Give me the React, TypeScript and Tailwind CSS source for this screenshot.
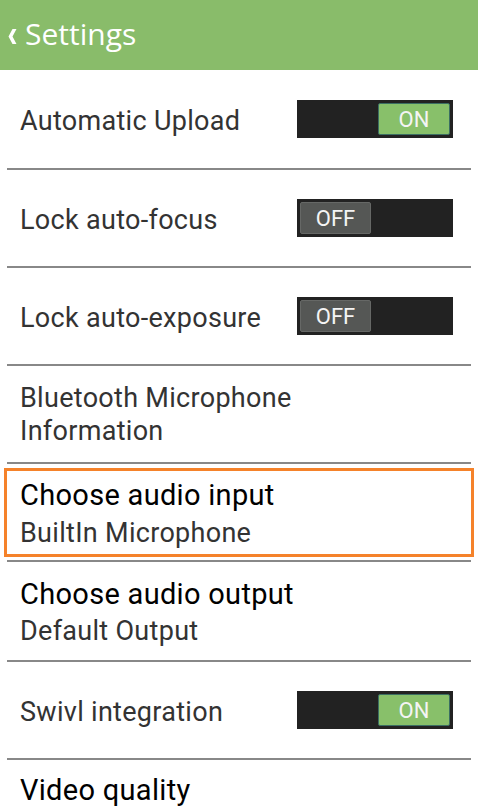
import React from 'react';

function Toggle({ on }: { on: boolean }) {
    return (
        <div className="w-[156px] h-[38px] bg-[#222222] flex items-center px-[3px] shrink-0" style={{ justifyContent: on ? 'flex-end' : 'flex-start' }}>
            <div
                className={
                    on
                        ? 'w-[72px] h-[32px] rounded-[2px] bg-[#88c06a] border border-[#3b6e62] flex items-center justify-center text-[22px] text-[#f4f4f4]'
                        : 'w-[71px] h-[32px] rounded-[2px] bg-[#555755] border border-[#666866] flex items-center justify-center text-[22px] text-[#f4f4f4]'
                }
            >
                {on ? 'ON' : 'OFF'}
            </div>
        </div>
    );
}

function Divider() {
    return <div className="mx-[7px] h-[2px] bg-[#888888]" />;
}

function ToggleRow({ label, on, h }: { label: string; on: boolean; h: string }) {
    return (
        <div className={`${h} flex items-center justify-between pl-[20px] pr-[25px]`}>
            <span className="text-[27px] tracking-[0.3px] text-[#333333] pt-[4px]">{label}</span>
            <Toggle on={on} />
        </div>
    );
}

export default function App() {
    return (
        <div className="w-[478px] h-[811px] bg-white overflow-hidden" style={{ fontFamily: 'Roboto, "Liberation Sans", sans-serif' }}>
            {/* Header */}
            <div className="h-[70px] bg-[#89bc6a] flex items-center pl-[8px] gap-[8px]">
                <svg width="9" height="15" viewBox="0 0 9 15" className="mt-[3px]">
                    <polygon points="4.5,0 8.5,0 4.5,7.5 8.5,15 4.5,15 0.5,7.5" fill="white" />
                </svg>
                <span className="text-[30px] text-white leading-none pb-[3px]" style={{ fontFamily: '"Open Sans", sans-serif' }}>Settings</span>
            </div>

            <ToggleRow label="Automatic Upload" on={true} h="h-[98px]" />
            <Divider />
            <ToggleRow label="Lock auto-focus" on={false} h="h-[96px]" />
            <Divider />
            <ToggleRow label="Lock auto-exposure" on={false} h="h-[96px]" />
            <Divider />

            <div className="h-[96px] flex flex-col justify-center pl-[20px] text-[27px] tracking-[0.3px] text-[#333333] leading-[33px] pt-[1px]">
                <span>Bluetooth Microphone</span>
                <span>Information</span>
            </div>
            <Divider />

            <div className="h-[96px] px-[4px] pt-[4px]">
                <div className="h-[89px] border-[3px] border-[#f5822a] flex flex-col justify-center pl-[13px] pt-[3px]">
                    <span className="text-[29px] tracking-[0.3px] text-black leading-[38px]">Choose audio input</span>
                    <span className="text-[27px] tracking-[0.3px] text-[#333333] leading-[38px]">BuiltIn Microphone</span>
                </div>
            </div>
            <Divider />

            <div className="h-[98px] flex flex-col justify-center pl-[20px] pt-[4px]">
                <span className="text-[29px] tracking-[0.3px] text-black leading-[37px]">Choose audio output</span>
                <span className="text-[27px] tracking-[0.3px] text-[#333333] leading-[37px]">Default Output</span>
            </div>
            <Divider />

            <ToggleRow label="Swivl integration" on={true} h="h-[96px]" />
            <Divider />

            <div className="h-[60px] flex items-center pl-[20px] pt-[2px]">
                <span className="text-[29px] tracking-[0.3px] text-black">Video quality</span>
            </div>
        </div>
    );
}
